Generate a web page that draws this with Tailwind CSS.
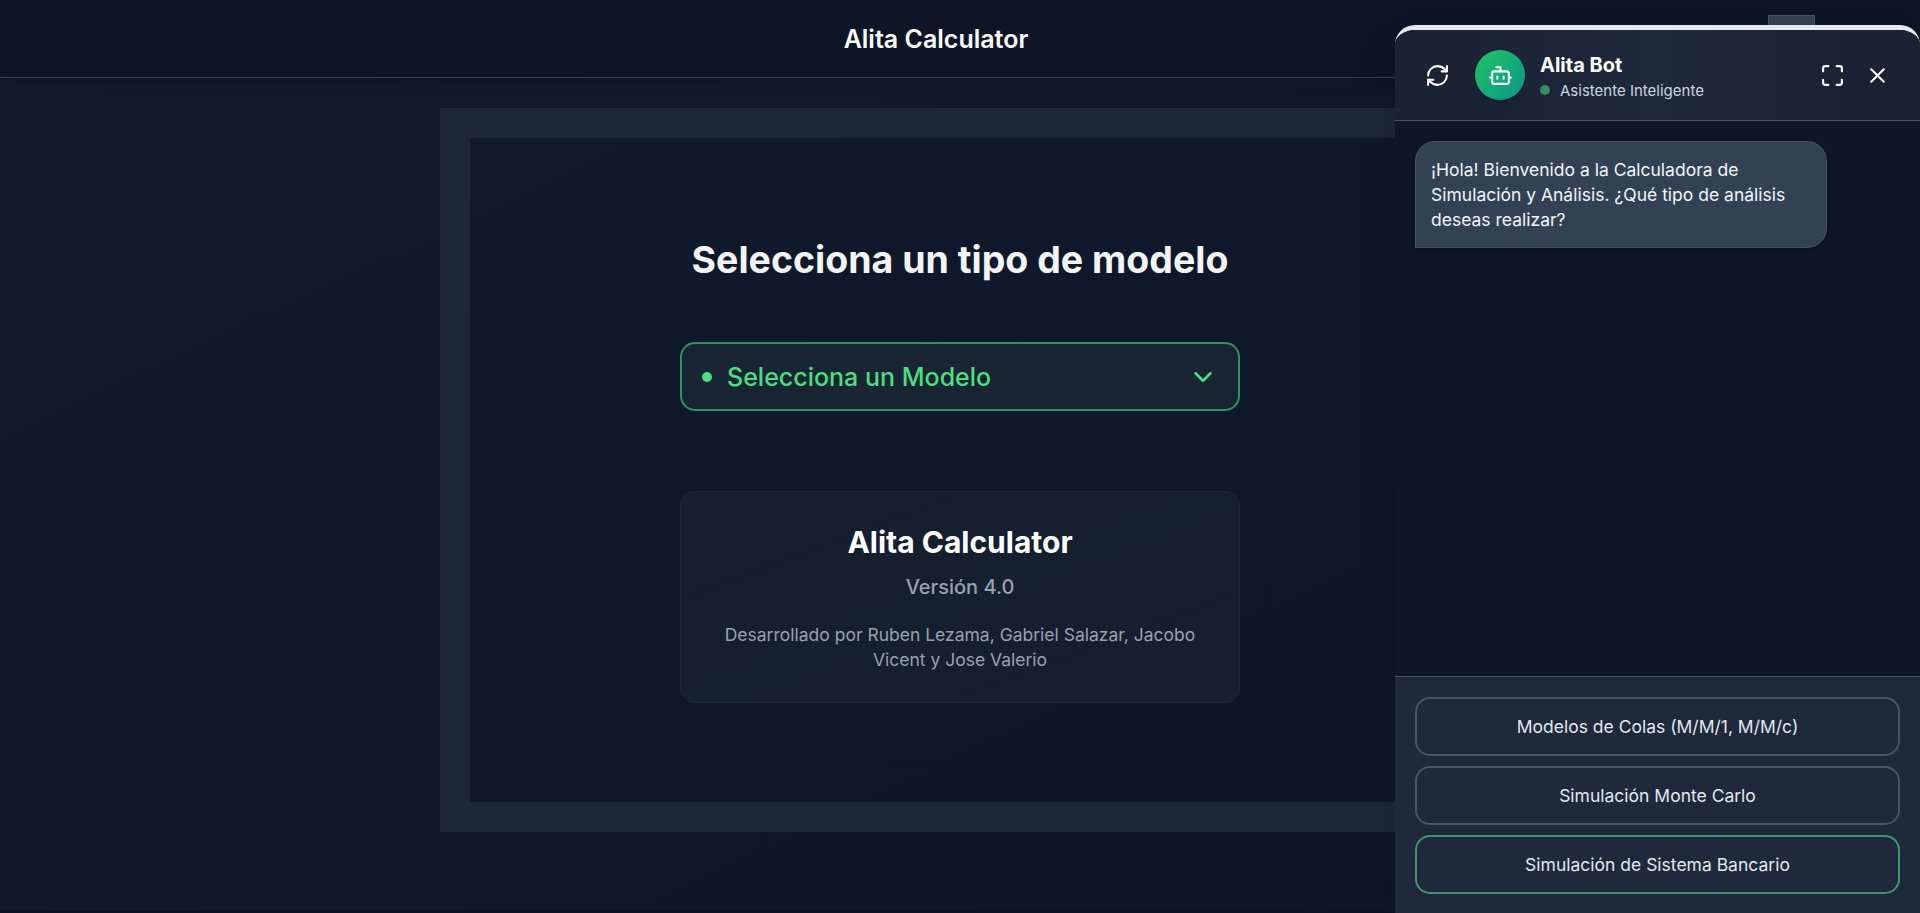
<!DOCTYPE html>
<html lang="es" class="text-[20px]">
<head>
<meta charset="utf-8">
<title>Alita Calculator</title>
<script src="https://cdn.jsdelivr.net/npm/@tailwindcss/browser@4"></script>
</head>
<body class="relative h-[913px] overflow-hidden bg-[#0c1222] font-[Inter,sans-serif] text-white antialiased">
  <div class="flex h-[911px] flex-col bg-linear-to-br from-[#121b2d] via-[#0f182a] to-[#0e1628]">
    <header class="relative flex h-[78px] shrink-0 items-center justify-center border-b border-[#334155] bg-[#0d1527] pt-[2px] pr-[48px] shadow-lg">
      <h1 class="text-xl font-semibold">Alita Calculator</h1>
    </header>
    <main class="mx-auto mt-[30px] flex h-[724px] w-[1040px] flex-col items-center border-[30px] border-[#1e293b]/95">
      <h2 class="mt-[99px] text-3xl font-bold text-gray-100">Selecciona un tipo de modelo</h2>
      <button class="mt-[60px] flex h-[69px] w-[560px] items-center gap-3 rounded-xl border-2 border-[#34915f] bg-[#1a2533] px-4 text-xl font-medium text-[#4ade80]">
        <span class="size-2 rounded-full bg-[#4ade80]"></span>
        <span class="flex-1 pt-[2px] text-left">Selecciona un Modelo</span>
        <svg class="size-6" viewBox="0 0 24 24" fill="none" stroke="currentColor" stroke-width="2" stroke-linecap="round" stroke-linejoin="round"><path d="m6 9 6 6 6-6"/></svg>
      </button>
      <section class="mt-16 w-[560px] rounded-xl border border-[#1c293a] bg-linear-to-br from-[#171e2f] via-[#141f30] to-[#171e2f] p-6 text-center">
        <h3 class="text-2xl leading-[40px] font-bold">Alita Calculator</h3>
        <p class="mt-2 text-base font-medium text-gray-400">Versión 4.0</p>
        <p class="mt-4 text-sm text-gray-400">Desarrollado por Ruben Lezama, Gabriel Salazar, Jacobo Vicent y Jose Valerio</p>
      </section>
    </main>
  </div>

  <div class="absolute top-[15px] left-[1768px] h-10 w-[47px] border border-[#475569] bg-[#334155]"></div>

  <!-- Chat panel -->
  <aside class="absolute top-[25px] right-0 flex h-[889px] w-[525px] flex-col overflow-hidden rounded-t-[20px] border-t-[5px] border-gray-200 bg-[#0e1628] shadow-2xl">
    <div class="flex h-[91px] shrink-0 items-center border-b border-[#475569] bg-linear-to-r from-[#192133] via-[#1e293b] to-[#192133] px-4">
      <button class="p-2" aria-label="Reiniciar"><svg class="size-5" viewBox="0 0 24 24" fill="none" stroke="currentColor" stroke-width="2" stroke-linecap="round" stroke-linejoin="round"><path d="M3 12a9 9 0 0 1 9-9 9.75 9.75 0 0 1 6.74 2.74L21 8"/><path d="M21 3v5h-5"/><path d="M21 12a9 9 0 0 1-9 9 9.75 9.75 0 0 1-6.74-2.74L3 16"/><path d="M8 16H3v5"/></svg></button>
      <div class="ml-3 flex size-10 items-center justify-center rounded-full bg-linear-to-br from-[#22c55e] to-[#0d9488] shadow-lg">
        <svg class="size-5" viewBox="0 0 24 24" fill="none" stroke="currentColor" stroke-width="2" stroke-linecap="round" stroke-linejoin="round"><path d="M12 8V4H8"/><rect width="16" height="12" x="4" y="8" rx="2"/><path d="M2 14h2M20 14h2M15 13v2M9 13v2"/></svg>
      </div>
      <div class="ml-3 flex-1">
        <p class="h-[29px] pt-[1px] text-base leading-[28px] font-bold">Alita Bot</p>
        <p class="flex items-center gap-2 text-xs leading-[20px] text-slate-300"><span class="size-2 rounded-full bg-[#3a8d60]"></span><span class="pt-[2px]">Asistente Inteligente</span></p>
      </div>
      <button class="p-2" aria-label="Ampliar"><svg class="size-5" viewBox="0 0 24 24" fill="none" stroke="currentColor" stroke-width="2" stroke-linecap="round" stroke-linejoin="round"><path d="M8 3H5a2 2 0 0 0-2 2v3M21 8V5a2 2 0 0 0-2-2h-3M3 16v3a2 2 0 0 0 2 2h3M16 21h3a2 2 0 0 0 2-2v-3"/></svg></button>
      <button class="p-2" aria-label="Cerrar"><svg class="size-5" viewBox="0 0 24 24" fill="none" stroke="currentColor" stroke-width="2" stroke-linecap="round" stroke-linejoin="round"><path d="M18 6 6 18M6 6l12 12"/></svg></button>
    </div>
    <div class="flex-1 p-4">
      <p class="w-[85%] rounded-2xl rounded-bl-none border border-[#475569] bg-[#334155] p-3 text-sm text-slate-100 shadow-md">¡Hola! Bienvenido a la Calculadora de Simulación y Análisis. ¿Qué tipo de análisis deseas realizar?</p>
    </div>
    <div class="flex flex-col gap-2 border-t border-[#475569] bg-[#1e293b] p-4 text-sm text-slate-200">
      <button class="rounded-xl border-2 border-[#475569] p-3">Modelos de Colas (M/M/1, M/M/c)</button>
      <button class="rounded-xl border-2 border-[#475569] p-3">Simulación Monte Carlo</button>
      <button class="rounded-xl border-2 border-[#45946c] p-3">Simulación de Sistema Bancario</button>
    </div>
  </aside>
</body>
</html>
